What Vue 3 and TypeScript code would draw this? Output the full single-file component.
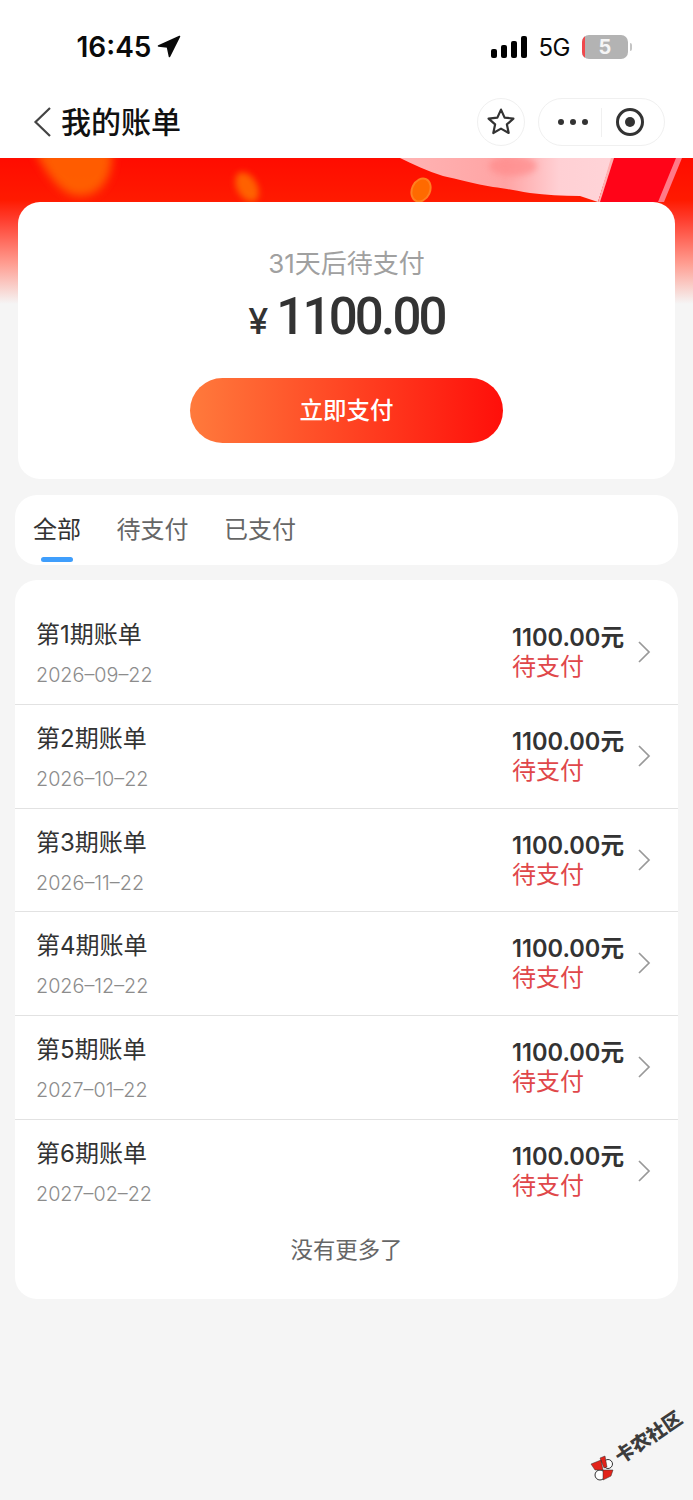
<script setup lang="ts">
interface Bill {
  period: number
  date: string
}

const tabs = ['全部', '待支付', '已支付']
const bills: Bill[] = [
  { period: 1, date: '2026–09–22' },
  { period: 2, date: '2026–10–22' },
  { period: 3, date: '2026–11–22' },
  { period: 4, date: '2026–12–22' },
  { period: 5, date: '2027–01–22' },
  { period: 6, date: '2027–02–22' },
]
</script>

<template>
  <div class="page">
    <header class="top">
      <div class="status">
        <div class="time">
          <span>16:45</span>
          <svg width="24" height="24" viewBox="0 0 24 24"><path d="M22.5 1.5 1.5 11l9 1 2 9.5z" fill="#0a0a0a" stroke="#0a0a0a" stroke-width="1.6" stroke-linejoin="round" /></svg>
        </div>
        <div class="status-right">
          <div class="signal"><i></i><i></i><i></i><i></i></div>
          <span class="net">5G</span>
          <div class="battery"><b></b><span>5</span></div>
          <i class="battery-cap"></i>
        </div>
      </div>
      <nav class="nav">
        <div class="nav-left">
          <svg class="back" width="20" height="32" viewBox="0 0 20 32"><path d="M18 2 3.5 16 18 30" fill="none" stroke="#444" stroke-width="2.2" /></svg>
          <h1>我的账单</h1>
        </div>
        <div class="nav-right">
          <div class="star-btn">
            <svg width="30" height="30" viewBox="0 0 30 30"><path d="M15 2.6l3.6 8 8.8 1-6.5 5.8 1.8 8.6-7.7-4.4-7.7 4.4 1.8-8.6-6.5-5.8 8.8-1z" fill="none" stroke="#333" stroke-width="2.2" stroke-linejoin="round" /></svg>
          </div>
          <div class="capsule">
            <div class="dots"><i></i><i></i><i></i></div>
            <i class="sep"></i>
            <div class="target"><i></i></div>
          </div>
        </div>
      </nav>
    </header>

    <section class="hero">
      <svg class="hero-art" width="693" height="44" viewBox="0 0 693 44">
        <defs>
          <filter id="blur8" x="-40%" y="-40%" width="180%" height="180%"><feGaussianBlur stdDeviation="5" /></filter>
          <filter id="blur3" x="-60%" y="-60%" width="220%" height="220%"><feGaussianBlur stdDeviation="3" /></filter>
          <filter id="blur1" x="-20%" y="-20%" width="140%" height="140%"><feGaussianBlur stdDeviation="0.6" /></filter>
          <linearGradient id="cloth" x1="0" y1="0" x2="1" y2="0">
            <stop offset="0" stop-color="#ffb4b4" />
            <stop offset="0.5" stop-color="#ffa4a4" />
            <stop offset="0.75" stop-color="#ffd0d4" />
            <stop offset="1" stop-color="#ffd4d8" />
          </linearGradient>
        </defs>
        <path d="M34 -8h78c2 22-8 46-32 46C60 38 46 14 34 -8z" fill="#ff6a00" opacity=".85" filter="url(#blur8)" />
        <ellipse cx="247" cy="29" rx="10" ry="16" transform="rotate(-30 247 29)" fill="#ff6a00" opacity=".9" filter="url(#blur3)" />
        <ellipse cx="421" cy="32" rx="10" ry="13" transform="rotate(25 421 32)" fill="#ff8020" />
        <ellipse cx="421" cy="32" rx="8" ry="11" transform="rotate(25 421 32)" fill="#ff6a00" />
        <path d="M400 0h212l-14 44-18-6c-18 0-34-1-50-3-14-2-26-5-37-6-18-3-36-8-50-11-16-5-30-12-43-18z" fill="url(#cloth)" filter="url(#blur1)" />
        <ellipse cx="513" cy="8" rx="24" ry="10" fill="#ff8a8a" opacity=".7" filter="url(#blur3)" />
        <path d="M598 44 612 0h70l-22 44z" fill="#ff0418" />
        <path d="M611 0h3l-14 44h-2z" fill="#ffb0b0" />
        <path d="M676 0h6l-18 44h-6z" fill="#ff7a88" />
      </svg>

      <div class="summary">
        <p class="due">31天后待支付</p>
        <p class="amount"><span class="yen">¥</span>1100.00</p>
        <button class="pay" type="button">立即支付</button>
      </div>
    </section>

    <div class="tabs">
      <div v-for="(tab, i) in tabs" :key="tab" class="tab" :class="{ active: i === 0 }">{{ tab }}</div>
    </div>

    <section class="list">
      <div v-for="bill in bills" :key="bill.period" class="row">
        <div class="row-left">
          <div class="row-title">第{{ bill.period }}期账单</div>
          <div class="row-date">{{ bill.date }}</div>
        </div>
        <div class="row-right">
          <div class="row-money">1100.00元</div>
          <div class="row-state">待支付</div>
        </div>
        <svg class="arrow" width="14" height="24" viewBox="0 0 14 24"><path d="M2 2l10 10L2 22" fill="none" stroke="#999" stroke-width="1.7" /></svg>
      </div>
      <div class="no-more">没有更多了</div>
    </section>

    <svg class="mark-logo" width="30" height="30" viewBox="-15 -15 30 30">
      <circle cx="5" cy="-4" r="4.5" fill="#fff" stroke="#333" />
      <circle cx="-3" cy="7" r="5" fill="#fff" stroke="#333" />
      <path d="M-12-4-2-8 0 2-8 2zM-3-10 2-12 4-1 1 0zM0 2H10L8 8 0 12z" fill="#e2231a" stroke="#333" stroke-width=".5" />
    </svg>
    <span class="mark">卡农社区</span>
  </div>
</template>

<style>
body {
  margin: 0;
  background: #f5f5f5;
}
</style>

<style scoped>
.page {
  position: relative;
  height: 1500px;
  overflow: hidden;
  background: #f5f5f5;
  font-family: Inter, "Noto Sans CJK SC", sans-serif;
}

.top {
  height: 158px;
  background: #fff;
}

.status {
  height: 90px;
  display: flex;
  justify-content: space-between;
  padding: 26px 61px 0 76.5px;
  box-sizing: border-box;
}

.time {
  display: flex;
  align-items: center;
  gap: 6px;
  height: 42px;
  font-size: 28px;
  font-weight: 600;
  color: #0a0a0a;
}

.status-right {
  display: flex;
  align-items: center;
  height: 42px;
}

.signal {
  display: flex;
  align-items: flex-end;
  gap: 3.7px;
  height: 22px;
  margin-right: 12px;
}

.signal i {
  width: 6px;
  border-radius: 2px;
  background: #000;
}
.signal i:nth-child(1) { height: 9px; }
.signal i:nth-child(2) { height: 13px; }
.signal i:nth-child(3) { height: 17px; }
.signal i:nth-child(4) { height: 22px; }

.net {
  font-size: 24px;
  color: #0a0a0a;
  margin-right: 12px;
  letter-spacing: -0.5px;
}

.battery {
  position: relative;
  width: 46px;
  height: 24px;
  border-radius: 7px;
  overflow: hidden;
  background: #b3b3b3;
  color: #f5f5f5;
  font-size: 20px;
  font-weight: 700;
  line-height: 24px;
  text-align: center;
}

.battery b {
  position: absolute;
  left: 0;
  top: 0;
  bottom: 0;
  width: 3px;
  background: #f0484c;
}

.battery-cap {
  width: 2px;
  height: 8px;
  margin-left: 2px;
  border-radius: 0 2px 2px 0;
  background: #c4c4c4;
}

.nav {
  height: 64px;
  display: flex;
  align-items: center;
  justify-content: space-between;
  padding: 0 28px 0 32px;
}

.nav-left {
  display: flex;
  align-items: center;
  gap: 9px;
}

.back {
  display: block;
}

.nav h1 {
  margin: 0;
  font-size: 30px;
  font-weight: 500;
  color: #111;
  line-height: 40px;
}

.nav-right {
  display: flex;
  align-items: center;
  gap: 13px;
}

.star-btn {
  width: 48px;
  height: 48px;
  box-sizing: border-box;
  border: 1px solid #f0f0f0;
  border-radius: 50%;
  display: flex;
  align-items: center;
  justify-content: center;
}

.capsule {
  width: 127px;
  height: 48px;
  box-sizing: border-box;
  border: 1px solid #f0f0f0;
  border-radius: 24px;
  display: flex;
  align-items: center;
  padding-left: 19px;
}

.dots {
  display: flex;
  gap: 6px;
}

.dots i {
  width: 6px;
  height: 6px;
  border-radius: 50%;
  background: #333;
}

.sep {
  width: 1px;
  height: 29px;
  margin-left: 13px;
  background: #f0f0f0;
}

.target {
  width: 28px;
  height: 28px;
  box-sizing: border-box;
  margin-left: 14px;
  border: 3px solid #333;
  border-radius: 50%;
  display: flex;
  align-items: center;
  justify-content: center;
}

.target i {
  width: 10px;
  height: 10px;
  border-radius: 50%;
  background: #333;
}

.hero {
  position: relative;
  padding: 44px 18px 0;
  background: linear-gradient(#ff0c00 0, #ff1a00 42px, #ff3a2a 60px, #ff9c90 105px, #f5f5f5 146px);
}

.hero-art {
  position: absolute;
  left: 0;
  top: 0;
}

.summary {
  position: relative;
  height: 277px;
  box-sizing: border-box;
  padding-top: 44px;
  border-radius: 22px;
  background: #fff;
  text-align: center;
}

.due {
  margin: 0;
  height: 36px;
  font-size: 26px;
  line-height: 36px;
  color: #a0a0a0;
}

.amount {
  margin: 0;
  height: 60px;
  padding-top: 5px;
  font-family: Roboto, sans-serif;
  font-size: 51px;
  font-weight: 500;
  line-height: 60px;
  letter-spacing: -2.8px;
  color: #333;
}

.yen {
  font-family: Inter, sans-serif;
  font-size: 36px;
  letter-spacing: 0;
  margin-right: 8px;
}

.pay {
  display: block;
  width: 313px;
  height: 65px;
  margin: 31px auto 0;
  padding: 0 0 4px;
  border: 0;
  border-radius: 33px;
  background: linear-gradient(90deg, #ff7a3c, #ff0f0a);
  color: #fff;
  font-family: inherit;
  font-size: 23.5px;
  font-weight: 500;
}

.tabs {
  display: flex;
  gap: 35.5px;
  height: 70px;
  margin: 16px 15px 0;
  padding-left: 18px;
  border-radius: 22px;
  background: #fff;
}

.tab {
  position: relative;
  font-size: 24px;
  line-height: 70px;
  color: #666;
}

.tab.active {
  color: #333;
}

.tab.active::after {
  content: "";
  position: absolute;
  left: 8px;
  bottom: 3px;
  width: 32px;
  height: 5px;
  border-radius: 3px;
  background: #3f9efc;
}

.list {
  height: 719px;
  box-sizing: border-box;
  margin: 15px 15px 0;
  padding-top: 21.4px;
  border-radius: 22px;
  background: #fff;
}

.row {
  height: 103.7px;
  box-sizing: border-box;
  display: flex;
  align-items: flex-start;
  padding: 0 27px 0 21px;
  border-bottom: 1px solid #e2e2e2;
}

.row:nth-last-child(2) {
  border-bottom: 0;
}

.row-left {
  flex: 1;
  padding-top: 17px;
}

.row-title {
  font-size: 24px;
  line-height: 34px;
  color: #333;
}

.row-date {
  margin-top: 9px;
  font-size: 19.8px;
  font-weight: 300;
  line-height: 28px;
  color: #8c8c8c;
}

.row-right {
  width: 113px;
  padding-top: 22px;
}

.row-money {
  font-size: 23.6px;
  font-weight: 600;
  line-height: 30px;
  color: #333;
  white-space: nowrap;
}

.row-state {
  margin-top: -1px;
  font-size: 24px;
  line-height: 30px;
  color: #e0474a;
}

.arrow {
  margin: 39px 0 0 12px;
}

.no-more {
  margin-top: 6px;
  font-size: 22.4px;
  line-height: 40px;
  color: #666;
  text-align: center;
}

.mark-logo {
  position: absolute;
  left: 588px;
  top: 1453px;
}

.mark {
  position: absolute;
  left: 611px;
  top: 1425px;
  width: 76px;
  font-size: 19px;
  font-weight: 900;
  line-height: 26px;
  color: #3c3c3c;
  white-space: nowrap;
  transform: rotate(-34deg);
}
</style>
